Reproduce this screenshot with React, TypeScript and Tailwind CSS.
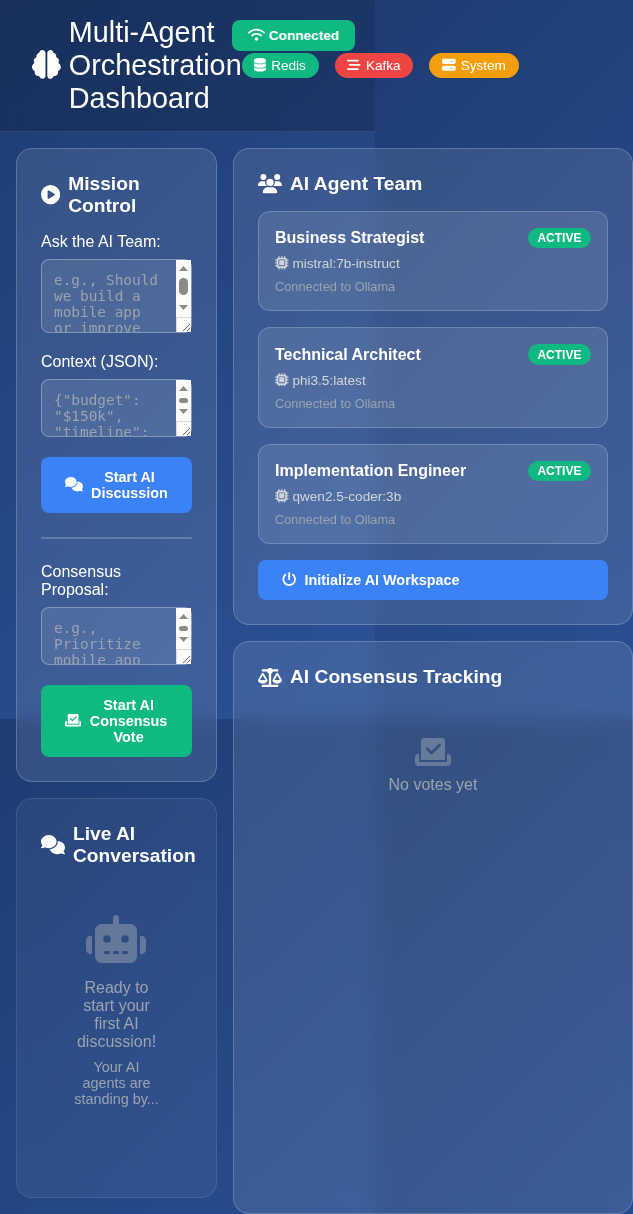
import type { ReactNode } from "react";
import type { IconType } from "react-icons";
import {
  FaBarsStaggered,
  FaBrain,
  FaCheckToSlot,
  FaCirclePlay,
  FaComments,
  FaDatabase,
  FaMicrochip,
  FaPowerOff,
  FaRobot,
  FaScaleBalanced,
  FaServer,
  FaUsers,
  FaWifi,
} from "react-icons/fa6";

const agents = [
  { name: "Business Strategist", model: "mistral:7b-instruct" },
  { name: "Technical Architect", model: "phi3.5:latest" },
  { name: "Implementation Engineer", model: "qwen2.5-coder:3b" },
];

const services: { name: string; icon: IconType; iconWidth: string; color: string }[] = [
  { name: "Redis", icon: FaDatabase, iconWidth: "w-[0.875em]", color: "bg-[#10b981]" },
  { name: "Kafka", icon: FaBarsStaggered, iconWidth: "w-[1em]", color: "bg-[#ef4444]" },
  { name: "System", icon: FaServer, iconWidth: "w-[1em]", color: "bg-[#f59e0b]" },
];

function Card({ className, children }: { className: string; children: ReactNode }) {
  return (
    <section className={`rounded-2xl border p-6 backdrop-blur-[10px] ${className}`}>{children}</section>
  );
}

function CardTitle({ icon: Icon, iconWidth, children }: { icon: IconType; iconWidth: string; children: ReactNode }) {
  return (
    <h2 className="mb-4 flex items-center gap-2 text-[19.2px] font-semibold leading-[22px]">
      <Icon className={`h-[1em] shrink-0 ${iconWidth}`} />
      <span>{children}</span>
    </h2>
  );
}

function ScrollBar({ thumb }: { thumb: string }) {
  return (
    <div className="absolute inset-y-px right-px flex w-[15px] flex-col bg-[#fcfcfc]">
      <div className="flex grow flex-col items-center pb-[7px] pt-[6px]">
        <svg viewBox="0 0 9 5" className="h-[5px] w-[9px] shrink-0" fill="#8b8b8b">
          <path d="M0 5 4.5 0 9 5z" />
        </svg>
        <div className={`mt-[7px] w-[9px] shrink-0 rounded-full bg-[#8b8b8b] ${thumb}`} />
        <svg viewBox="0 0 9 5" className="mt-auto h-[5px] w-[9px] shrink-0" fill="#8b8b8b">
          <path d="M0 0 4.5 5 9 0z" />
        </svg>
      </div>
      <svg
        viewBox="0 0 15 15"
        className="h-[15px] w-[15px] shrink-0 border-l border-t border-[#dcdcdc]"
        fill="none"
        stroke="#4a4a4a"
        strokeWidth="1"
      >
        <path d="M6.5 14 14 6.5M10.5 14 14 10.5" />
      </svg>
    </div>
  );
}

function Field({
  label,
  placeholder,
  rows,
  thumb,
}: {
  label: string;
  placeholder: string;
  rows: number;
  thumb: string;
}) {
  return (
    <div className="mb-5">
      <label className="mb-2 block leading-[18px]">{label}</label>
      <div className="relative">
        <textarea
          rows={rows}
          placeholder={placeholder}
          className="block w-full resize-none rounded-lg border border-white/30 bg-white/10 py-3 pl-3 pr-[27px] font-['DejaVu_Sans_Mono',monospace] text-[14.4px] leading-[16px] text-white placeholder:text-[#9ca3af]"
        />
        <ScrollBar thumb={thumb} />
      </div>
    </div>
  );
}

function ActionButton({
  icon: Icon,
  iconWidth,
  className,
  children,
}: {
  icon: IconType;
  iconWidth: string;
  className: string;
  children: ReactNode;
}) {
  return (
    <button
      className={`flex w-full items-center gap-2 rounded-lg px-6 py-3 text-[14.4px] font-semibold leading-[16px] ${className}`}
    >
      <Icon className={`mb-px h-[1em] shrink-0 ${iconWidth}`} />
      <span>{children}</span>
    </button>
  );
}

export default function App() {
  return (
    <div className="relative h-[1214px] w-[633px] overflow-hidden bg-[linear-gradient(135deg,#1e3c72_0%,#2a5298_100%)] bg-[length:375px_719px] font-['Liberation_Sans',Arial,sans-serif] text-base leading-[normal] text-white">
      <header className="flex h-[132px] w-[375px] items-center justify-between border-b border-white/10 bg-black/20 px-8 py-4 backdrop-blur-[10px]">
        <h1 className="flex items-center gap-2 text-[28.8px] leading-[33px]">
          <FaBrain className="mb-[2px] h-[1em] w-[1em] shrink-0" />
          <span>Multi-Agent Orchestration Dashboard</span>
        </h1>
        <div className="flex shrink-0 gap-4">
          {services.map(({ name, icon: Icon, iconWidth, color }) => (
            <div
              key={name}
              className={`flex items-center gap-[4.8px] rounded-[20px] px-[12.8px] py-[4.8px] text-[13.6px] leading-[15.4px] ${color}`}
            >
              <Icon className={`mb-[1.4px] h-[1em] shrink-0 ${iconWidth}`} />
              <span>{name}</span>
            </div>
          ))}
        </div>
      </header>

      <div className="absolute left-[232px] top-5 flex h-[31px] w-[123px] items-center gap-[3.8px] rounded-lg bg-[#10b981] px-4 text-[13.6px] font-semibold">
        <FaWifi className="mb-px h-[1em] w-[1.25em] shrink-0" />
        <span>Connected</span>
      </div>

      <main className="grid grid-cols-[201px_400px] items-start gap-4 pl-4 pt-4">
        <div className="flex flex-col gap-4">
          <Card className="h-[634px] border-white/20 bg-white/10">
            <CardTitle icon={FaCirclePlay} iconWidth="w-[1em]">
              Mission Control
            </CardTitle>
            <Field
              label="Ask the AI Team:"
              placeholder="e.g., Should we build a mobile app or improve our web platform first?"
              rows={3}
              thumb="h-[17px]"
            />
            <Field
              label="Context (JSON):"
              placeholder={'{"budget": "$150k", "timeline": "6 months", "team_size": 5}'}
              rows={2}
              thumb="h-[5px]"
            />
            <ActionButton icon={FaComments} iconWidth="w-[1.25em]" className="bg-[#3b82f6]">
              Start AI Discussion
            </ActionButton>
            <hr className="my-6 border-0 border-t-2 border-white/20" />
            <Field
              label="Consensus Proposal:"
              placeholder="e.g., Prioritize mobile app development over web"
              rows={2}
              thumb="h-[5px]"
            />
            <ActionButton icon={FaCheckToSlot} iconWidth="w-[1.125em]" className="bg-[#10b981]">
              Start AI Consensus Vote
            </ActionButton>
          </Card>

          <Card className="h-[400px] border-white/10 bg-white/5">
            <CardTitle icon={FaComments} iconWidth="w-[1.25em]">
              Live AI Conversation
            </CardTitle>
            <div className="flex flex-col items-center p-8 text-center text-[#9ca3af]">
              <FaRobot className="mb-4 mr-px h-12 w-[60px] opacity-50" />
              <p className="leading-[18px]">Ready to start your first AI discussion!</p>
              <p className="mt-2 text-[14.4px] leading-[16px]">Your AI agents are standing by...</p>
            </div>
          </Card>
        </div>

        <div className="flex flex-col gap-4">
          <Card className="h-[477px] border-white/20 bg-white/10">
            <CardTitle icon={FaUsers} iconWidth="w-[1.25em]">
              AI Agent Team
            </CardTitle>
            {agents.map((agent) => (
              <div
                key={agent.name}
                className="mb-4 h-[100.33px] rounded-xl border border-white/20 bg-white/10 p-4"
              >
                <div className="mb-2 flex items-center justify-between">
                  <span className="font-semibold leading-[18px]">{agent.name}</span>
                  <span className="rounded-xl bg-[#10b981] px-[9.6px] py-[3.2px] text-xs font-semibold leading-[14px]">
                    ACTIVE
                  </span>
                </div>
                <div className="mb-[7.5px] flex items-center gap-[3.8px] text-[13.6px] leading-[15.4px] text-[#d1d5db]">
                  <FaMicrochip className="mb-[1.6px] h-[1em] w-[1em] shrink-0" />
                  <span>{agent.model}</span>
                </div>
                <p className="text-[12.8px] leading-[15px] text-[#9ca3af]">Connected to Ollama</p>
              </div>
            ))}
            <ActionButton icon={FaPowerOff} iconWidth="w-[1em]" className="bg-[#3b82f6]">
              Initialize AI Workspace
            </ActionButton>
          </Card>

          <Card className="h-[573px] border-white/20 bg-white/10">
            <CardTitle icon={FaScaleBalanced} iconWidth="mt-px w-[1.25em]">
              AI Consensus Tracking
            </CardTitle>
            <div className="flex flex-col items-center p-8 text-center text-[#9ca3af]">
              <FaCheckToSlot className="mb-2 h-8 w-9 opacity-50" />
              <p className="leading-[18px]">No votes yet</p>
            </div>
          </Card>
        </div>
      </main>
    </div>
  );
}
